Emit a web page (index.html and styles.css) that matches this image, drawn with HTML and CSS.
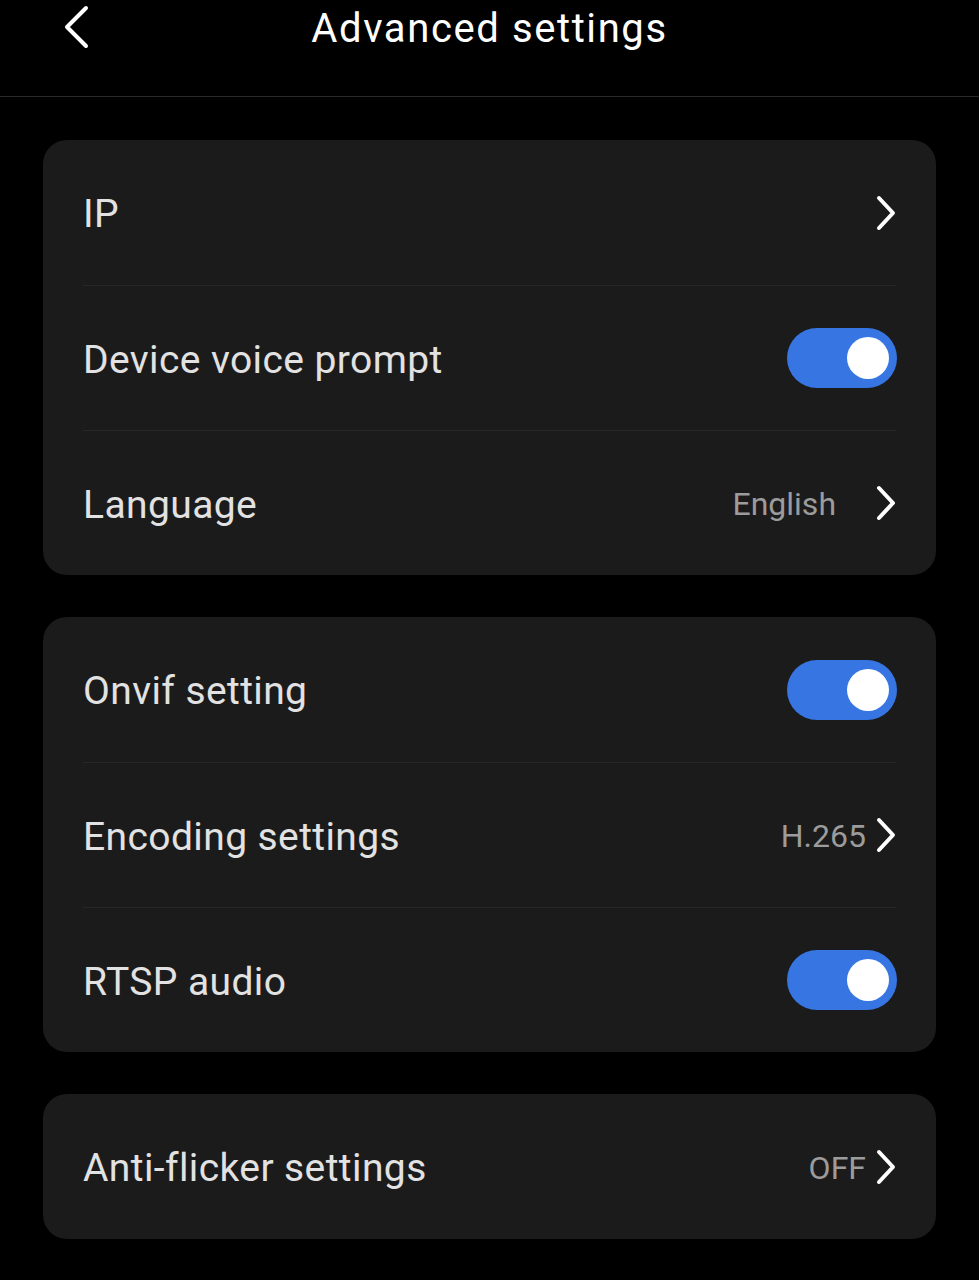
FILE: index.html
```html
<!DOCTYPE html>
<html lang="en">
<head>
	<meta charset="UTF-8" />
	<meta name="viewport" content="width=device-width, initial-scale=1.0" />
	<title>Advanced settings</title>
	<link rel="stylesheet" href="styles.css">
</head>
<body>
	<header class="topbar">
		<button class="back" aria-label="Back">
			<svg width="28" height="44" viewBox="0 0 28 44"><path d="M24 3 L5 22 L24 41" fill="none" stroke="#fff" stroke-width="4" stroke-linecap="round" stroke-linejoin="round"/></svg>
		</button>
		<h1>Advanced settings</h1>
	</header>

	<main class="content">
		<section class="card">
			<div class="row">
				<span class="label">IP</span>
				<span class="chev"></span>
			</div>
			<div class="row">
				<span class="label">Device voice prompt</span>
				<span class="toggle on"><i></i></span>
			</div>
			<div class="row">
				<span class="label">Language</span>
				<span class="value wide">English</span>
				<span class="chev"></span>
			</div>
		</section>

		<section class="card">
			<div class="row">
				<span class="label">Onvif setting</span>
				<span class="toggle on"><i></i></span>
			</div>
			<div class="row">
				<span class="label">Encoding settings</span>
				<span class="value">H.265</span>
				<span class="chev"></span>
			</div>
			<div class="row">
				<span class="label">RTSP audio</span>
				<span class="toggle on"><i></i></span>
			</div>
		</section>

		<section class="card">
			<div class="row">
				<span class="label">Anti-flicker settings</span>
				<span class="value">OFF</span>
				<span class="chev"></span>
			</div>
		</section>
	</main>
</body>
</html>
```

FILE: styles.css
```css
body {
	margin: 0;
	background: #000;
	color: #e2e2e2;
	font-family: Roboto, "Noto Sans", sans-serif;
}

.topbar {
	height: 96px;
	border-bottom: 1px solid #2a2a2a;
	display: flex;
	align-items: flex-start;
	justify-content: center;
	position: relative;
}

.topbar h1 {
	margin: 5px 0 0;
	font-size: 40px;
	font-weight: 400;
	color: #fff;
	letter-spacing: 1.6px;
}

.back {
	position: absolute;
	left: 62px;
	top: 5px;
	background: none;
	border: none;
	padding: 0;
}

.content {
	padding: 43px 43px 40px;
	display: flex;
	flex-direction: column;
	gap: 42px;
}

.card {
	background: #1b1b1b;
	border-radius: 24px;
	padding: 0 40px;
}

.row {
	height: 144px;
	display: flex;
	align-items: center;
	border-top: 1px solid #272727;
}

.row:first-child {
	border-top: none;
	height: 145px;
}

.label {
	flex: 1;
	font-size: 39px;
	letter-spacing: 0.4px;
	color: #e2e2e2;
	padding-top: 3px;
}

.value {
	font-size: 32px;
	color: #9c9c9c;
	margin-right: 10px;
	padding-top: 2px;
}

.value.wide {
	margin-right: 40px;
}

.chev {
	width: 20px;
	height: 36px;
	background: no-repeat center/20px 36px url("data:image/svg+xml,%3Csvg xmlns='http://www.w3.org/2000/svg' width='20' height='36' viewBox='0 0 20 36'%3E%3Cpath d='M3 3 L17 18 L3 33' fill='none' stroke='%23fff' stroke-width='4' stroke-linecap='round' stroke-linejoin='round'/%3E%3C/svg%3E");
}

.toggle {
	width: 110px;
	height: 60px;
	border-radius: 30px;
	background: #3776e2;
	display: flex;
	align-items: center;
	justify-content: flex-end;
	padding-right: 8px;
	box-sizing: border-box;
	margin-right: -1px;
}

.toggle i {
	width: 42px;
	height: 42px;
	border-radius: 50%;
	background: #fff;
}
```
